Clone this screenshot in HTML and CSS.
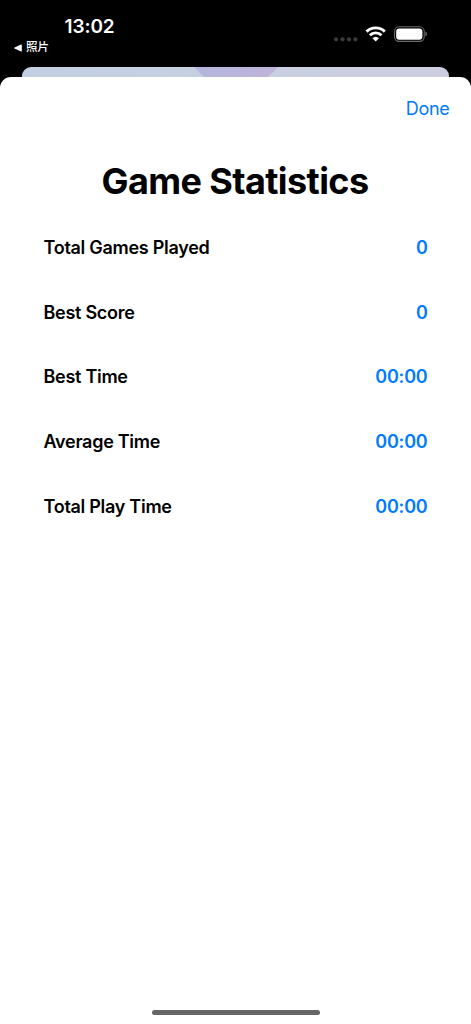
FILE: index.html
```
<!DOCTYPE html>
<html lang="en">
<head>
    <meta charset="UTF-8">
    <meta name="viewport" content="width=device-width, initial-scale=1.0">
    <title>Game Statistics</title>
    <link rel="stylesheet" href="styles.css">
</head>
<body>
<header class="status-bar">
  <div class="status-left">
    <div class="clock">13:02</div>
    <div class="back-app">
      <svg width="8" height="8" viewBox="0 0 8 8"><path d="M0.6 3.5L7 .5Q7.8 .2 7.8 1V7Q7.8 7.8 7 7.5L.6 4.5Q-.2 4 .6 3.5Z" fill="#fff"/></svg>
      <span>照片</span>
    </div>
  </div>
  <svg class="status-icons" width="96" height="18" viewBox="333 25 96 18">
    <!-- no signal -->
    <g fill="#3c3c3c">
      <circle cx="336" cy="39.3" r="2.1"/>
      <circle cx="342.5" cy="39.3" r="2.1"/>
      <circle cx="349" cy="39.3" r="2.1"/>
      <circle cx="355.4" cy="39.3" r="2.1"/>
    </g>
    <!-- wifi -->
    <g fill="none" stroke="#fff" stroke-width="2.9">
      <path d="M366.6 31.6A13 13 0 0 1 384.8 31.6"/>
      <path d="M369.9 35.3A8.2 8.2 0 0 1 381.5 35.3"/>
    </g>
    <path d="M372.4 38.2A4.9 4.9 0 0 1 379 38.2L375.7 41.5Z" fill="#fff"/>
    <!-- battery -->
    <rect x="394.6" y="26.8" width="29.6" height="14.6" rx="4.6" fill="none" stroke="#6b6b6b" stroke-width="1.1"/>
    <rect x="396.2" y="28.4" width="26.2" height="11.4" rx="3.2" fill="#fff"/>
    <path d="M425.4 31.7Q427.1 32.3 427.1 34T425.4 36.3Z" fill="#6b6b6b"/>
  </svg>
</header>
<div class="behind">
  <svg width="427" height="11" viewBox="0 0 427 11">
    <defs>
      <linearGradient id="circle">
        <stop offset="0" stop-color="#b3b6df"/>
        <stop offset="1" stop-color="#c0b3d9"/>
      </linearGradient>
    </defs>
    <path d="M172 0H256Q251 6 244 11H184Q177 6 172 0Z" fill="url(#circle)"/>
  </svg>
</div>
<main class="sheet">
  <nav class="toolbar"><a class="done">Done</a></nav>
  <h1 class="title">Game Statistics</h1>
  <div class="stats">
    <div class="row"><span class="label">Total Games Played</span><span class="value">0</span></div>
    <div class="row"><span class="label">Best Score</span><span class="value">0</span></div>
    <div class="row"><span class="label">Best Time</span><span class="value time">00:00</span></div>
    <div class="row"><span class="label">Average Time</span><span class="value time">00:00</span></div>
    <div class="row"><span class="label">Total Play Time</span><span class="value time">00:00</span></div>
  </div>
  <div class="home-indicator"></div>
</main>
</body>
</html>
```
FILE: styles.css
```
* {
  box-sizing: border-box;
}

body {
  margin: 0;
  height: 1024px;
  display: flex;
  flex-direction: column;
  overflow: hidden;
  background: #000;
  font-family: Inter, "Noto Sans CJK SC", sans-serif;
}

.status-bar {
  height: 67px;
  display: flex;
  justify-content: space-between;
  padding: 14px 42px 0 13px;
  color: #fff;
}

.clock {
  padding-left: 51.5px;
  font-size: 19px;
  line-height: 25px;
  font-weight: 600;
  letter-spacing: -0.1px;
}

.back-app {
  display: flex;
  align-items: center;
  gap: 4px;
  height: 17px;
  padding-left: 1px;
  font-size: 11.5px;
  line-height: 17px;
  font-weight: 500;
}

.status-icons {
  margin-top: 11px;
}

/* the page under the sheet */
.behind {
  height: 10px;
  margin: 0 22px;
  border-radius: 9px 9px 0 0;
  overflow: hidden;
  background: linear-gradient(90deg, #c1cfe2, #c8d0e1 50%, #cccde0);
}

.behind svg {
  display: block;
}

.sheet {
  flex: 1;
  display: flex;
  flex-direction: column;
  background: #fff;
  border-radius: 11px 11px 0 0;
}

.toolbar {
  display: flex;
  justify-content: flex-end;
  padding: 20px 21.5px 0 0;
}

.done {
  color: #007aff;
  font-size: 18px;
  line-height: 24px;
  letter-spacing: -0.3px;
}

.title {
  margin: 36px 1px 0 0;
  text-align: center;
  font-size: 36px;
  line-height: 48px;
  font-weight: 700;
  letter-spacing: -0.6px;
}

.stats {
  padding: 11px 43.5px 0;
}

.row {
  display: flex;
  justify-content: space-between;
  align-items: center;
  height: 64.6px;
  font-size: 18px;
  line-height: 22px;
  font-weight: 600;
  letter-spacing: -0.28px;
}

.value {
  color: #007aff;
}

.time {
  letter-spacing: -0.2px;
}

.home-indicator {
  width: 168px;
  height: 5px;
  margin: auto auto 9px;
  border-radius: 3px;
  background: #666;
}
```
